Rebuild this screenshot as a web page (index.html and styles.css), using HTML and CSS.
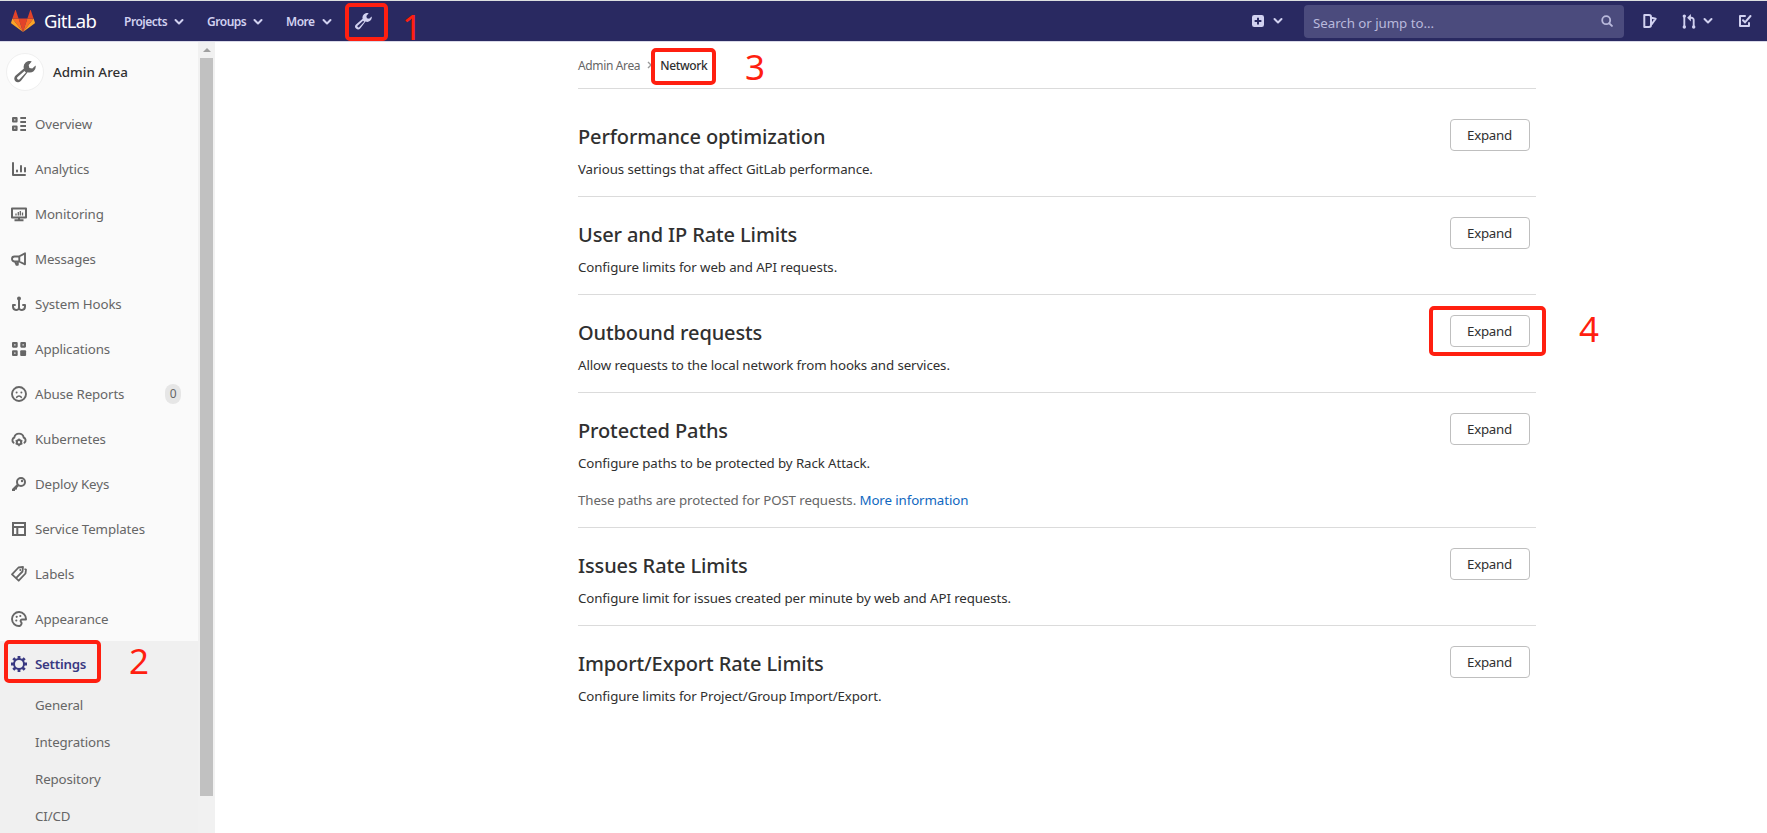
FILE: index.html
```html
<!DOCTYPE html>
<html lang="en">
<head>
<meta charset="utf-8">
<title>Network · Admin Area · GitLab</title>
<link rel="stylesheet" href="styles.css">
</head>
<body>
<svg class="sprite" aria-hidden="true">
  <symbol id="wrench" viewBox="0 0 16 16"><path fill="currentColor" fill-rule="evenodd" d="M12.900.3 10.700 2.900l.5 2.100 2.100.4L15.700 3.200a4.300 4.300 0 0 1-5.800 4.900L5.100 14.300a2.800 2.800 0 0 1-4.100.4 2.800 2.800 0 0 1 .2-4.100L7.200 5.500A4.300 4.300 0 0 1 12.900.3zM7.600 7.200 2.400 11.900a1.100 1.100 0 0 0 1.500 1.500L8.700 8.300z"/></symbol>
  <symbol id="chevron" viewBox="0 0 10 10"><path fill="none" stroke="currentColor" stroke-width="2" stroke-linecap="round" stroke-linejoin="round" d="M1.500 3 5 6.500 8.500 3"/></symbol>
  <symbol id="overview" viewBox="0 0 16 16"><path fill="none" stroke="currentColor" stroke-width="2.200" stroke-linejoin="round" d="M2.100 2.100h3.400v3.400H2.100zM2.100 10.500h3.400v3.400H2.100z"/><path stroke="currentColor" stroke-width="2" d="M9.300 2H15M9.300 6H15M9.300 10H15M9.300 14H15"/></symbol>
  <symbol id="chart" viewBox="0 0 16 16"><path fill="none" stroke="currentColor" stroke-width="2" stroke-linecap="round" stroke-linejoin="round" d="M2 2v12h12M6 9.500v1M10 5v5.500M14 7v3.500"/></symbol>
  <symbol id="monitor" viewBox="0 0 16 16"><path fill="none" stroke="currentColor" stroke-width="2" stroke-linejoin="round" d="M1 2.500h14v9H1zM3.500 14.300h9M8 11.500v3"/><path stroke="currentColor" stroke-width="1.300" d="M5 7.500v2M7.300 6v3.500M9.300 5v4.500M11.500 6.500v3"/></symbol>
  <symbol id="horn" viewBox="0 0 16 16"><path fill="none" stroke="currentColor" stroke-width="1.900" stroke-linejoin="round" d="M14 2.300v11L8 10.500H3.500A2 2 0 0 1 3.500 5.500H8zM8.300 5.500v5M4 10.500l1.500 3.300h1.300V10.500"/></symbol>
  <symbol id="hook" viewBox="0 0 16 16"><circle cx="8" cy="2.500" r="2" fill="currentColor"/><path fill="none" stroke="currentColor" stroke-width="2" stroke-linejoin="round" d="M8 3v10.500M4.700 9H2v1.500c0 4.500 6 4.500 6 1 0 3.500 6 3.500 6-1V9h-2.700"/></symbol>
  <symbol id="apps" viewBox="0 0 16 16"><path fill="none" stroke="currentColor" stroke-width="2.200" stroke-linejoin="round" d="M2.100 2.100h3.500v3.500H2.100zM10.400 2.100h3.500v3.500h-3.500zM2.100 10.400h3.500v3.500H2.100z"/><rect x="9.200" y="9.200" width="5.900" height="5.900" rx="1" fill="currentColor"/></symbol>
  <symbol id="sad" viewBox="0 0 16 16"><circle cx="8" cy="8" r="7" fill="none" stroke="currentColor" stroke-width="1.900"/><circle cx="5.600" cy="6.500" r="1" fill="currentColor"/><circle cx="10.400" cy="6.500" r="1" fill="currentColor"/><path fill="none" stroke="currentColor" stroke-width="1.600" stroke-linecap="round" d="M5.700 11.300c1.200-1.700 3.400-1.700 4.600 0"/></symbol>
  <symbol id="cloud" viewBox="0 0 16 16"><path fill="none" stroke="currentColor" stroke-width="1.900" stroke-linecap="round" d="M2.600 11.700A3 3 0 0 1 3.300 6.500a4.800 4.800 0 0 1 9.400 0 3 3 0 0 1 .7 5.200"/><circle cx="8" cy="11.300" r="2.200" fill="none" stroke="currentColor" stroke-width="2"/><path stroke="currentColor" stroke-width="1.400" d="M8 7.500v1.500M8 13.500v1.800M4.600 9.500l1.400.8M10 10.300l1.400-.8M4.600 13.200l1.400-.8M10 12.400l1.400.8"/></symbol>
  <symbol id="key" viewBox="0 0 16 16"><circle cx="10" cy="6" r="4" fill="none" stroke="currentColor" stroke-width="2"/><circle cx="11" cy="5" r="1.200" fill="currentColor"/><path fill="none" stroke="currentColor" stroke-width="2.600" d="m7 9-5 5"/><path stroke="currentColor" stroke-width="2" d="M1 14h3M4 12.500h2"/></symbol>
  <symbol id="template" viewBox="0 0 16 16"><path fill="none" stroke="currentColor" stroke-width="2" d="M2 2h12v12H2zM2 6h12M6.300 6v8"/></symbol>
  <symbol id="labels" viewBox="0 0 16 16"><path fill="none" stroke="currentColor" stroke-width="1.800" stroke-linejoin="round" d="M7.500 1.500 12 1l-.5 4.500-6.500 6.700L1 8.300zM13.500 3l1.500.5-.5 4L7.700 14.700 5 12.200"/><circle cx="9.300" cy="4" r="1" fill="currentColor"/></symbol>
  <symbol id="palette" viewBox="0 0 16 16"><path fill="none" stroke="currentColor" stroke-width="1.900" stroke-linejoin="round" d="M8.500 15a7 7 0 1 1 6.500-6.500H11a1.500 1.500 0 0 0-.8 2.700c1 1-.2 3.300-1.700 3.800z"/><circle cx="5.300" cy="9.500" r="1.100" fill="currentColor"/><circle cx="5.700" cy="5.800" r="1.100" fill="currentColor"/><circle cx="9.300" cy="5" r="1.100" fill="currentColor"/></symbol>
  <symbol id="gear" viewBox="0 0 16 16"><circle cx="8" cy="8" r="5" fill="none" stroke="currentColor" stroke-width="2"/><path stroke="currentColor" stroke-width="2.800" d="M8 0v3M8 13v3M0 8h3M13 8h3M2.300 2.300l2 2M11.700 11.700l2 2M2.300 13.700l2-2M11.700 4.300l2-2"/></symbol>
  <symbol id="plus" viewBox="0 0 16 16"><path fill="currentColor" fill-rule="evenodd" d="M3 0h10a3 3 0 0 1 3 3v10a3 3 0 0 1-3 3H3a3 3 0 0 1-3-3V3a3 3 0 0 1 3-3zm3.700 3.500v3.200H3.500v2.600h3.200v3.200h2.600V9.300h3.200V6.700H9.300V3.500z"/></symbol>
  <symbol id="search" viewBox="0 0 12 12"><circle cx="5.200" cy="5.200" r="4" fill="none" stroke="currentColor" stroke-width="1.800"/><path stroke="currentColor" stroke-width="1.900" stroke-linecap="round" d="m8.300 8.300 2.600 2.600"/></symbol>
  <symbol id="issues" viewBox="0 0 14 14"><path fill="none" stroke="currentColor" stroke-width="2" stroke-linejoin="round" d="M1.300 1h4.700a2 2 0 0 1 2 2v8a2 2 0 0 1-2 2H1.300zM8.500 3.700l4.200 1L8.500 10.500"/></symbol>
  <symbol id="merge" viewBox="0 0 16 16"><path fill="none" stroke="currentColor" stroke-width="2" d="M3 2v12M8 4H10.500a2.500 2.500 0 0 1 2.500 2.500V14"/><circle cx="3" cy="2.200" r="1.800" fill="currentColor"/><circle cx="3" cy="13.800" r="1.800" fill="currentColor"/><circle cx="13" cy="13.800" r="1.800" fill="currentColor"/><path fill="currentColor" d="M10 0v8L6 4z"/></symbol>
  <symbol id="todo" viewBox="0 0 14 14"><path fill="none" stroke="currentColor" stroke-width="2" stroke-linejoin="round" stroke-linecap="round" d="M7 2H2v10h9V9"/><path fill="none" stroke="currentColor" stroke-width="2" stroke-linecap="round" d="M5 6.300 7 8.300 12.500 2"/></symbol>
</svg>

<header class="navbar">
  <a class="brand">
    <svg class="tanuki" viewBox="0 0 24 23"><path fill="#e24329" d="M12 22 7.600 8.500h8.800z"/><path fill="#fc6d26" d="M12 22 7.600 8.500H1.400zM12 22l4.400-13.500h6.200z"/><path fill="#fca326" d="M1.400 8.500.1 12.600c-.1.400 0 .8.300 1L12 22zM22.600 8.500l1.300 4.100c.1.400 0 .8-.3 1L12 22z"/><path fill="#e24329" d="M1.400 8.500h6.200L4.900.4c-.1-.4-.7-.4-.8 0zM22.600 8.500h-6.200L19.100.4c.1-.4.700-.4.800 0z"/></svg>
    <span class="wordmark">GitLab</span>
  </a>
  <nav class="menu">
    <a class="menu-item projects">Projects<svg class="chev"><use href="#chevron"/></svg></a>
    <a class="menu-item groups">Groups<svg class="chev"><use href="#chevron"/></svg></a>
    <a class="menu-item more">More<svg class="chev"><use href="#chevron"/></svg></a>
    <a class="menu-admin"><svg class="icon"><use href="#wrench"/></svg></a>
  </nav>
  <div class="tools">
    <a class="tool create"><svg class="i12"><use href="#plus"/></svg><svg class="chev"><use href="#chevron"/></svg></a>
    <div class="search"><span>Search or jump to...</span><svg class="i12"><use href="#search"/></svg></div>
    <a class="tool"><svg class="i14"><use href="#issues"/></svg></a>
    <a class="tool mr"><svg class="i16"><use href="#merge"/></svg><svg class="chev"><use href="#chevron"/></svg></a>
    <a class="tool todo"><svg class="i14"><use href="#todo"/></svg></a>
  </div>
</header>

<div class="page">
  <aside class="sidebar">
    <div class="context"><span class="avatar"><svg><use href="#wrench"/></svg></span><span class="context-title">Admin Area</span></div>
    <a class="item"><svg class="icon"><use href="#overview"/></svg>Overview</a>
    <a class="item"><svg class="icon"><use href="#chart"/></svg>Analytics</a>
    <a class="item"><svg class="icon"><use href="#monitor"/></svg>Monitoring</a>
    <a class="item"><svg class="icon"><use href="#horn"/></svg>Messages</a>
    <a class="item"><svg class="icon"><use href="#hook"/></svg>System Hooks</a>
    <a class="item"><svg class="icon"><use href="#apps"/></svg>Applications</a>
    <a class="item"><svg class="icon"><use href="#sad"/></svg>Abuse Reports<span class="count">0</span></a>
    <a class="item"><svg class="icon"><use href="#cloud"/></svg>Kubernetes</a>
    <a class="item"><svg class="icon"><use href="#key"/></svg>Deploy Keys</a>
    <a class="item"><svg class="icon"><use href="#template"/></svg>Service Templates</a>
    <a class="item"><svg class="icon"><use href="#labels"/></svg>Labels</a>
    <a class="item"><svg class="icon"><use href="#palette"/></svg>Appearance</a>
    <div class="active-group">
      <a class="item active"><svg class="icon"><use href="#gear"/></svg>Settings</a>
      <a class="subitem">General</a>
      <a class="subitem">Integrations</a>
      <a class="subitem">Repository</a>
      <a class="subitem">CI/CD</a>
    </div>
  </aside>
  <div class="scrollbar"><span class="arrow"></span><span class="thumb"></span></div>
  <main class="content">
    <nav class="breadcrumbs"><span>Admin Area</span><svg class="sep" viewBox="0 0 6 8"><path fill="none" stroke="#999" stroke-width="1.400" d="m1 1 3 3-3 3"/></svg><b>Network</b></nav>
    <section class="setting"><div><h4>Performance optimization</h4><p>Various settings that affect GitLab performance.</p></div><button class="btn">Expand</button></section>
    <section class="setting"><div><h4>User and IP Rate Limits</h4><p>Configure limits for web and API requests.</p></div><button class="btn">Expand</button></section>
    <section class="setting"><div><h4>Outbound requests</h4><p>Allow requests to the local network from hooks and services.</p></div><button class="btn">Expand</button></section>
    <section class="setting"><div><h4>Protected Paths</h4><p>Configure paths to be protected by Rack Attack.</p><p class="note">These paths are protected for POST requests. <a>More information</a></p></div><button class="btn">Expand</button></section>
    <section class="setting"><div><h4>Issues Rate Limits</h4><p>Configure limit for issues created per minute by web and API requests.</p></div><button class="btn">Expand</button></section>
    <section class="setting"><div><h4>Import/Export Rate Limits</h4><p>Configure limits for Project/Group Import/Export.</p></div><button class="btn">Expand</button></section>
  </main>
</div>

<div class="mark box-1"></div><div class="digit digit-1">1</div>
<div class="mark box-2"></div><div class="digit digit-2">2</div>
<div class="mark box-3"></div><div class="digit digit-3">3</div>
<div class="mark box-4"></div><div class="digit digit-4">4</div>
</body>
</html>
```
FILE: styles.css
```css
* { box-sizing: border-box; }
body {
  margin: 0;
  height: 833px;
  overflow: hidden;
  position: relative;
  background: #fff;
  color: #303030;
  font: 13.3px/20px "Noto Sans", "Open Sans", sans-serif;
  letter-spacing: -0.1px;
}
.sprite { display: none; }
svg { flex: none; display: block; }
.icon { width: 16px; height: 16px; }
.i12 { width: 12px; height: 12px; }
.i14 { width: 14px; height: 14px; }
.i16 { width: 16px; height: 15px; }
.chev { width: 10px; height: 10px; }

/* Top bar */
.navbar {
  height: 42px;
  display: flex;
  align-items: center;
  padding-left: 11px;
  background: #292961;
  border-top: 1px solid #dcdfe0;
  border-bottom: 1px solid #d9d9e8;
  color: #d1d1f0;
}
.brand { display: flex; align-items: center; width: 113px; gap: 9px; }
.tanuki { width: 24px; height: 23px; }
.wordmark { color: #fff; font-size: 18.5px; line-height: 24px; letter-spacing: -0.7px; }
.menu { display: flex; align-items: center; font-size: 12px; font-weight: 600; letter-spacing: -0.48px; padding-top: 2px; }
.menu-item { display: flex; align-items: center; justify-content: space-between; }
.projects { width: 60px; margin-right: 23px; }
.groups { width: 56px; margin-right: 23px; }
.more { width: 46px; margin-right: 23px; }
.menu-item .chev { margin-top: -1px; }
.menu-admin .icon { width: 17px; height: 17px; margin-top: -2px; }
.tools { display: flex; align-items: center; margin-left: auto; padding-right: 15px; }
.tool { display: flex; align-items: center; }
.create { gap: 9px; margin-right: 21px; }
.search {
  width: 320px;
  height: 33px;
  display: flex;
  align-items: center;
  justify-content: space-between;
  padding: 3px 11px 0 9px;
  margin-right: 19px;
  border-radius: 4px;
  background: #4b4b7d;
  color: #b9b9dc;
  letter-spacing: -0.04px;
}
.search .i12 { margin-top: -3px; }
.mr { gap: 6px; margin: 0 25px 0 24px; }

/* Sidebar */
.page { display: flex; height: 791px; }
.sidebar { width: 198px; background: #fafafa; color: #666; letter-spacing: -0.12px; overflow: hidden; }
.context { height: 59px; display: flex; align-items: center; padding-left: 6px; gap: 9px; }
.avatar {
  width: 38px;
  height: 38px;
  display: grid;
  place-items: center;
  border: 1px solid #f0f0f0;
  border-radius: 50%;
  background: #fff;
}
.avatar svg { width: 22px; height: 22px; }
.context-title { color: #303030; font-size: 13.4px; font-weight: 500; letter-spacing: 0.02px; }
.item { height: 45px; display: flex; align-items: center; gap: 8px; padding: 1px 17px 0 11px; }
.count {
  margin-left: auto;
  width: 16px;
  height: 20px;
  border-radius: 10px;
  background: #e6e6e6;
  font-size: 12px;
  text-align: center;
}
.active-group { background: #f0f0f0; height: 200px; }
.active { color: #393982; font-weight: 600; letter-spacing: -0.25px; }
.subitem { height: 37px; display: flex; align-items: center; padding-left: 35px; }
.scrollbar { width: 17px; background: #f1f1f1; padding: 6px 2px 0; display: flex; flex-direction: column; align-items: center; }
.arrow { border: 4px solid transparent; border-top: 0; border-bottom-color: #a0a0a0; margin-bottom: 6px; }
.thumb { width: 13px; height: 738px; background: #c1c1c1; }

/* Settings sections */
.content { width: 958px; margin-left: 363px; }
.breadcrumbs {
  height: 47px;
  display: flex;
  align-items: center;
  padding-top: 2px;
  border-bottom: 1px solid #dbdbdb;
  color: #666;
  font-size: 12px;
  letter-spacing: -0.36px;
}
.sep { width: 6px; height: 8px; margin: -2px 7px 0; }
.breadcrumbs b { color: #303030; font-weight: 500; }
.setting {
  display: flex;
  justify-content: space-between;
  align-items: flex-start;
  padding: 20px 6px 17px 0;
  border-bottom: 1px solid #dbdbdb;
}
.breadcrumbs + .setting { padding-top: 30px; }
.setting:last-child { border-bottom: 0; }
h4 { margin: 4px 0 9px; font-size: 20px; line-height: 27px; font-weight: 500; letter-spacing: -0.12px; }
p { margin: 0; }
.note { margin-top: 17px; color: #666; }
.note a { color: #1068bf; }
.btn {
  width: 80px;
  height: 32px;
  padding: 0 1px 0 0;
  border: 1px solid #bfbfbf;
  border-radius: 4px;
  background: #fff;
  color: #303030;
  font: inherit;
  letter-spacing: -0.25px;
}

/* Red step annotations lying over the page */
.mark { position: absolute; border: 4px solid #ff1f10; border-radius: 5px; }
.digit { position: absolute; color: #ff1f10; font: 35px/40px "Noto Sans", sans-serif; }
.box-1 { left: 345px; top: 3px; width: 43px; height: 38px; }
.box-2 { left: 4px; top: 640px; width: 97px; height: 43px; }
.box-3 { left: 651px; top: 48px; width: 65px; height: 37px; }
.box-4 { left: 1429px; top: 306px; width: 117px; height: 50px; }
.digit-1 { left: 402px; top: 7px; }
.digit-2 { left: 129px; top: 641px; }
.digit-3 { left: 745px; top: 47px; }
.digit-4 { left: 1579px; top: 309px; }
```
